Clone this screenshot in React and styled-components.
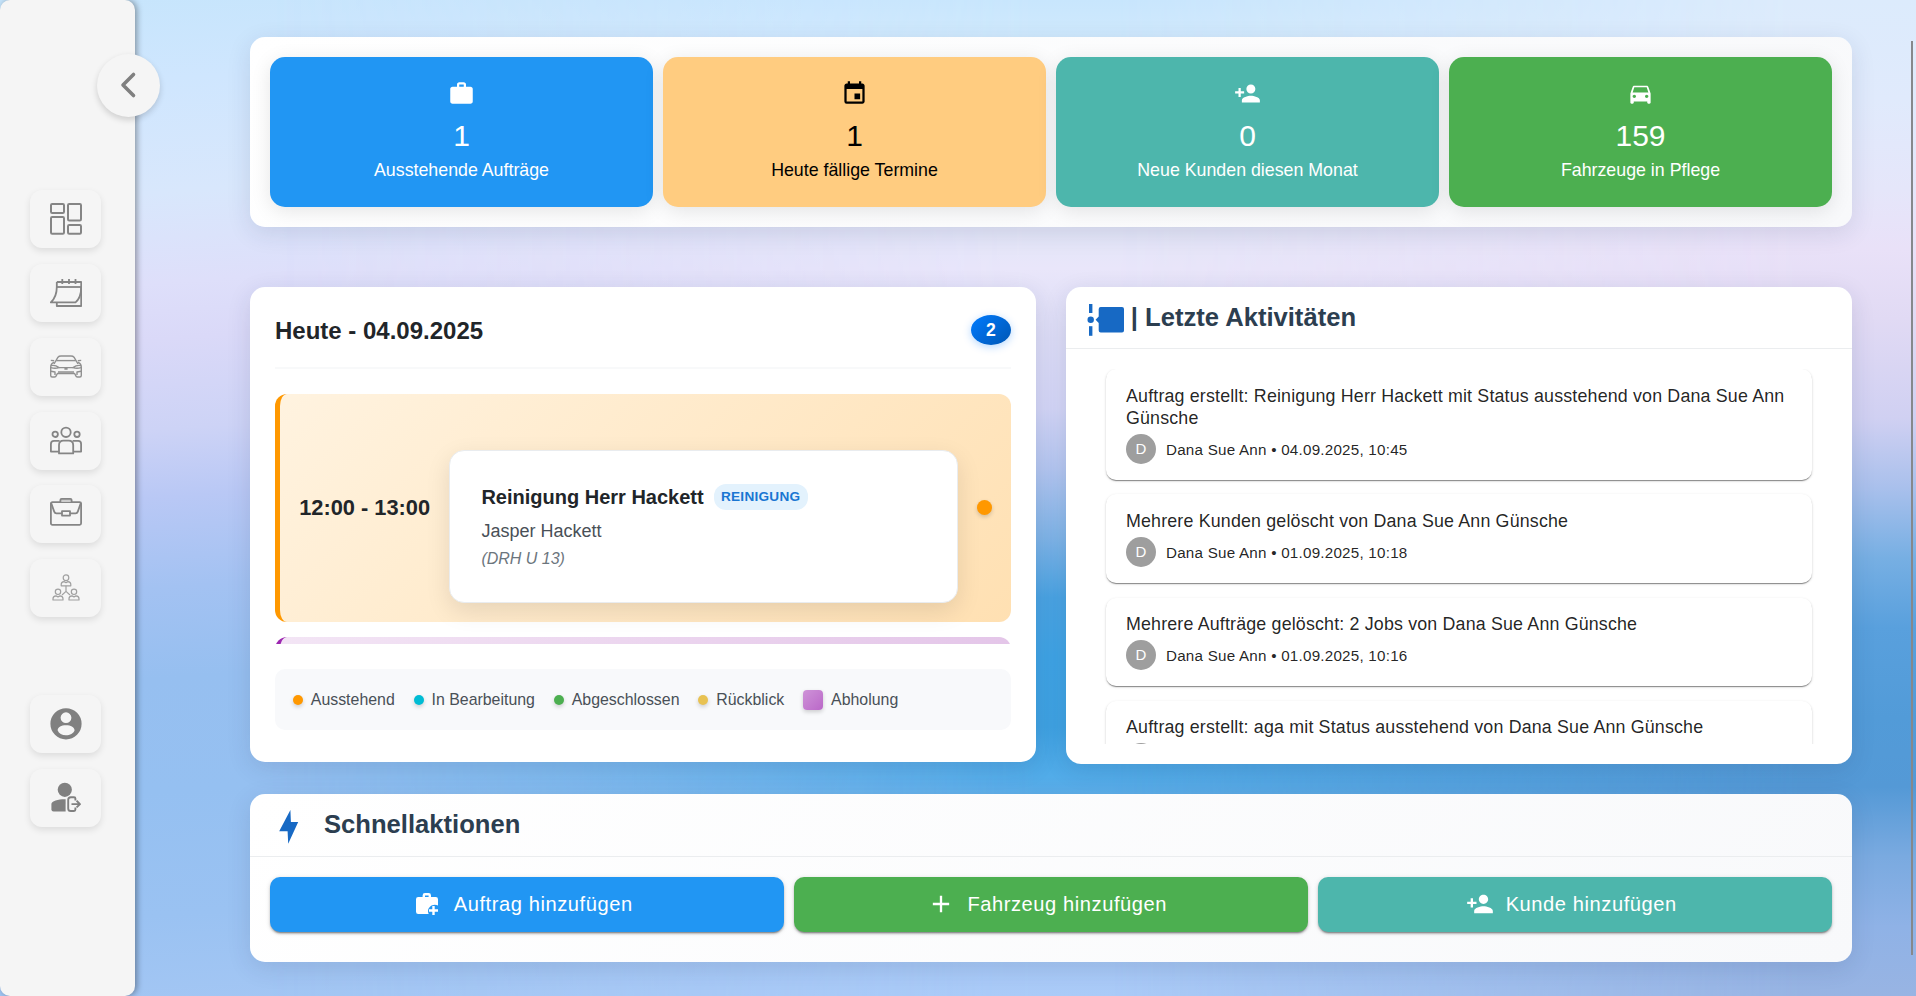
import React from "react";
import styled, { createGlobalStyle, css } from "styled-components";
import { MdWork, MdEvent, MdPersonAdd, MdDirectionsCar, MdAdd } from "react-icons/md";

const GlobalStyle = createGlobalStyle`
  *, *::before, *::after { box-sizing: border-box; }
  body {
    margin: 0;
    overflow: hidden;
    font-family: "Liberation Sans", Arial, sans-serif;
    color: rgba(0, 0, 0, 0.87);
  }
`;

/* ---------- page shell ---------- */

const Shell = styled.div`
  position: relative;
  display: flex;
  width: 100%;
  height: 100vh;
  overflow: hidden;
  isolation: isolate;
`;

const Wash = styled.div`
  position: absolute;
  inset: 0;
  z-index: -1;
  background: ${(p) => p.$fill};
  ${(p) =>
    p.$mask &&
    css`
      -webkit-mask-image: ${p.$mask};
      mask-image: ${p.$mask};
    `}
`;

const washes = [
  {
    fill: "linear-gradient(176deg, #c6e5fc 0%, #cfe6fe 8%, #d8e7fc 18%, #dedffa 26%, #dad9f8 31%, #cdd3f6 39%, #b9c8f5 45%, #a3c2f2 53%, #96bff0 61%, #95c0f1 71%, #9ac2f2 82%, #a5c7f4 92%, #a5c5f3 100%)",
  },
  {
    fill: "linear-gradient(180deg, #c8e6fd 0%, #d4ebfd 6%, #dcebfb 14%, #e3e6f8 23%, #e9e6fa 27%, #dcdcf6 34%, #d3d5f6 41%, #b4c6f0 47%, #7fb4e7 54%, #4aa3e2 60%, #3fa3e4 66%, #3fa2e2 73%, #52ace9 78%, #78b6ec 84%, #a0c5f4 92%, #abcbf8 100%)",
    mask: "linear-gradient(90deg, transparent 14%, rgba(0,0,0,.35) 30%, #000 54%)",
  },
  {
    fill: "linear-gradient(180deg, #dcebfc 0%, #e0eafc 10%, #e5e6fa 19%, #e9e1f8 25%, #e1daf4 32%, #d0d0f2 42%, #a9c0ec 49%, #77afe3 56%, #59a0dd 63%, #529bd8 72%, #5499d6 79%, #7aaae0 86%, #8fb2e6 93%, #98b4e3 100%)",
    mask: "linear-gradient(90deg, transparent 58%, #000 94%)",
  },
];

const ScrollRail = styled.div`
  flex: none;
  width: 2px;
  height: 914px;
  margin: 41px 3px 0 0;
  background: #86888c;
`;

/* ---------- sidebar ---------- */

const Sidebar = styled.aside`
  position: relative;
  flex: none;
  width: 135px;
  height: 100%;
  padding: 190.2px 0 0 30px;
  display: flex;
  flex-direction: column;
  background: #f5f5f5;
  border-radius: 10px;
  box-shadow: 2px 0 6px rgba(0, 0, 0, 0.36);
`;

const CollapseButton = styled.button`
  position: absolute;
  top: 54px;
  right: -25px;
  width: 63px;
  height: 63px;
  padding: 0;
  border: 0;
  border-radius: 50%;
  display: grid;
  place-items: center;
  background: #f5f5f5;
  box-shadow: 0 3px 6px rgba(0, 0, 0, 0.16);
`;

const NavGroup = styled.nav`
  display: flex;
  flex-direction: column;
  gap: 15.8px;
  & + & {
    margin-top: 77.8px;
    gap: 16px;
  }
`;

const NavButton = styled.button`
  width: 71px;
  height: 58px;
  padding: 0 0 0 1px;
  border: 0;
  border-radius: 12px;
  display: grid;
  place-items: center;
  background: #f5f5f5;
  box-shadow: 0 3px 7px rgba(0, 0, 0, 0.1);
`;

const Glyph = styled.svg`
  display: block;
  width: 32px;
  height: 32px;
  fill: ${(p) => (p.$solid ? "#808080" : "none")};
  stroke: ${(p) => (p.$solid ? "none" : p.$tone || "#858585")};
  stroke-width: ${(p) => p.$weight || 1.8};
  stroke-linejoin: round;
`;

const DashboardGlyph = () => (
  <Glyph viewBox="0 0 32 32" $weight={2}>
    <rect x="1" y="1" width="13" height="9" rx="1.2" />
    <rect x="18" y="1" width="13" height="16.4" rx="1.2" />
    <rect x="1" y="14" width="13" height="16.8" rx="1.2" />
    <rect x="18" y="22" width="13" height="8.8" rx="1.2" />
  </Glyph>
);

const CalendarGlyph = () => (
  <Glyph viewBox="0 0 32 32">
    <path d="M6.8 5H31.2V29H6.8V25.5" />
    <path d="M12.3 2v5M19 2v5M25.5 2v5" />
    <path d="M6.8 10H31.2" />
    <path d="M6.8 5V10C6.8 17 4.5 22 .8 25.4H25.5C29.5 22 31.2 17 31.2 10" />
  </Glyph>
);

const CarGlyph = () => (
  <Glyph viewBox="0 0 32 32" $weight={1.4} $tone="#909090">
    <path d="M4 13 8 6.2Q9 5 11 5H21Q23 5 24 6.2L28 13" />
    <path d="M6.3 9.6H25.7" />
    <path d="M.8 9.4 4.2 9.8M31.2 9.4 27.8 9.8" />
    <path d="M4 11.3Q.7 12.5.7 16V24.5Q.7 26 2.2 26H4.6Q5.8 26 6.4 24.4L7.4 22.5H24.6L25.6 24.4Q26.2 26 27.4 26H29.8Q31.3 26 31.3 24.5V16Q31.3 12.5 28 11.3" />
    <path d="M1 14.6Q5 13.6 9 16.6Q5 18 1 16.6M31 14.6Q27 13.6 23 16.6Q27 18 31 16.6" />
    <path d="M9 16.6H23M14.4 18H17.6M8 21H24M1 20.2 5 21V24M31 20.2 27 21V24" />
  </Glyph>
);

const PeopleGlyph = () => (
  <Glyph viewBox="0 0 32 32">
    <circle cx="16" cy="7.3" r="4.7" />
    <circle cx="5.2" cy="9.3" r="2.7" />
    <circle cx="27" cy="9.3" r="2.7" />
    <path d="M9 28.4V20.2Q9 15.6 13.4 15.6H18.6Q23.2 15.6 23.2 20.2V28.4Z" />
    <path d="M9.6 15.9H4Q.9 15.9.9 19V26.6H9M22.6 15.9H28.2Q31.1 15.9 31.1 19V26.6H23.2" />
  </Glyph>
);

const BriefcaseGlyph = () => (
  <Glyph viewBox="0 0 32 32">
    <rect x="0.9" y="4.2" width="30.2" height="22.6" rx="1.5" />
    <path d="M10.4 4V2Q10.4.9 11.6.9H20.4Q21.6.9 21.6 2V4" fill="#ccc" />
    <path d="M1 4.6 4.2 13.6Q4.8 15.3 6.4 15.3H12M20 15.3H25.6Q27.2 15.3 27.8 13.6L31 4.6" />
    <rect x="12" y="13.2" width="8" height="4.4" />
  </Glyph>
);

const TeamGlyph = () => (
  <Glyph viewBox="0 0 32 32" $weight={1.2} $tone="#a0a0a0">
    <circle cx="16" cy="5.7" r="2.8" />
    <path d="M11.2 13.8V12.4Q11.2 9.8 14 9.6L16 10.6 18 9.6Q20.8 9.8 20.8 12.4V13.8Z" />
    <path d="M16 13.8V19.4L12 23M16 19.4 20 23" />
    <circle cx="8" cy="19.8" r="2.7" />
    <circle cx="24" cy="19.8" r="2.7" />
    <path d="M3 28V26.8Q3 24.2 6 23.9L8 24.9 10 23.9Q13 24.2 13 26.8V28Z" />
    <path d="M19 28V26.8Q19 24.2 22 23.9L24 24.9 26 23.9Q29 24.2 29 26.8V28Z" />
  </Glyph>
);

const AccountGlyph = () => (
  <Glyph viewBox="0 0 32 32" $solid>
    <path
      fillRule="evenodd"
      d="M16 .2A15.6 15.6 0 1 1 16 31.4A15.6 15.6 0 1 1 16 .2ZM16 4.3A5.4 5.4 0 1 0 16 15.1A5.4 5.4 0 1 0 16 4.3ZM7.6 22.2C8.8 25.6 12 27.2 16 27.2S23.4 25.6 24.6 22.2C24 18.7 21 17.2 16 17.2S8.2 18.7 7.6 22.2Z"
    />
  </Glyph>
);

const LogoutGlyph = () => (
  <Glyph viewBox="0 0 32 32" $solid>
    <circle cx="14.8" cy="7.8" r="7.1" />
    <path d="M15.6 17.2C9 17 1.4 18.6 1.4 22V27.2Q1.4 29.4 3.6 29.4H15.6Z" />
    <path
      d="M25.4 18.6V16.6Q25.4 15.2 24 15.2H20.8Q18.2 15.2 18.2 17.8V26.4Q18.2 29 20.8 29H24Q25.4 29 25.4 27.6V25.6M21.5 22.1H29.6M26.6 18.8 30 22.1 26.6 25.4"
      fill="none"
      stroke="#808080"
      strokeWidth="1.9"
    />
  </Glyph>
);

/* ---------- shared content pieces ---------- */

const Main = styled.main`
  flex: 1;
  padding: 37px 59px 0 115px;
`;

const Card = styled.section`
  display: flex;
  flex-direction: column;
  border-radius: 15px;
  background: ${(p) => (p.$tinted ? "linear-gradient(135deg, #ffffff 0%, #f8f9fb 100%)" : "#fff")};
  box-shadow: 0 6px 24px rgba(30, 40, 80, 0.12);
`;

const CardHeader = styled.header`
  display: flex;
  height: 62px;
  flex: none;
  border-bottom: 1px solid #ebedef;
`;

const CardTitle = styled.h2`
  margin: 0;
  font-size: 25.6px;
  line-height: 30px;
  font-weight: 700;
  color: #2c3e50;
  white-space: pre;
`;

/* ---------- statistics ---------- */

const StatGrid = styled(Card)`
  display: grid;
  grid-template-columns: repeat(4, 1fr);
  gap: 10px;
  padding: 20px;
  height: 190px;
`;

const StatTile = styled.div`
  display: flex;
  flex-direction: column;
  align-items: center;
  padding-top: 22.5px;
  border-radius: 15px;
  background: ${(p) => p.$bg};
  color: ${(p) => p.$fg || "#fff"};
  box-shadow: 0 4px 20px rgba(0, 0, 0, 0.1);
  & > svg {
    width: 27px;
    height: 27px;
  }
`;

const StatValue = styled.div`
  margin-top: 11.5px;
  font-size: 30px;
  line-height: 36px;
`;

const StatLabel = styled.div`
  margin-top: 3.5px;
  font-size: 17.8px;
  line-height: 24px;
`;

const stats = [
  { icon: MdWork, value: "1", label: "Ausstehende Aufträge", bg: "#2196f3" },
  { icon: MdEvent, value: "1", label: "Heute fällige Termine", bg: "#ffcc80", fg: "#000" },
  { icon: MdPersonAdd, value: "0", label: "Neue Kunden diesen Monat", bg: "#4db6ac" },
  { icon: MdDirectionsCar, value: "159", label: "Fahrzeuge in Pflege", bg: "#4caf50" },
];

/* ---------- agenda ---------- */

const Columns = styled.div`
  display: grid;
  grid-template-columns: 1fr 1fr;
  align-items: start;
  gap: 30px;
  margin: 60px 0 30px;
`;

const Agenda = styled(Card)`
  height: 475px;
  padding: 25px 25px 0;
`;

const AgendaHeader = styled.header`
  display: flex;
  flex: none;
  justify-content: space-between;
  align-items: center;
  height: 57px;
  padding-bottom: 20px;
  border-bottom: 2px solid #f8f9fa;
`;

const AgendaTitle = styled.h2`
  margin: 2px 0 0;
  font-size: 24px;
  line-height: 28px;
  font-weight: 700;
  color: #212529;
`;

const CountBadge = styled.span`
  width: 40px;
  height: 30px;
  margin-top: 1px;
  border-radius: 50%;
  font-size: 17.6px;
  line-height: 30px;
  font-weight: 700;
  text-align: center;
  color: #fff;
  background: linear-gradient(135deg, #007bff, #0056b3);
  box-shadow: 0 2px 8px rgba(0, 123, 255, 0.3);
`;

const Timeline = styled.div`
  display: flex;
  flex: none;
  flex-direction: column;
  gap: 15px;
  height: 250px;
  margin-top: 25px;
  overflow: hidden;
`;

const Slot = styled.article`
  display: flex;
  flex: none;
  align-items: center;
  gap: 19.2px;
  height: 228px;
  padding: 19px 19.2px;
  border-left: 5px solid ${(p) => p.$accent};
  border-radius: 12px;
  background: ${(p) => p.$bg};
`;

const SlotTime = styled.div`
  flex: none;
  width: 131px;
  font-size: 21.8px;
  font-weight: 700;
  color: #212529;
  white-space: nowrap;
`;

const SlotDetails = styled.div`
  flex: 1;
  height: 153px;
  margin-top: 37px;
  padding: 32px 31px;
  border: 1px solid #e9ecef;
  border-radius: 15px;
  background: #fff;
  box-shadow: 0 8px 24px rgba(0, 0, 0, 0.1);
`;

const SlotHeading = styled.div`
  display: flex;
  align-items: center;
  gap: 10px;
  height: 28px;
  font-size: 20px;
  font-weight: 700;
  color: #212529;
`;

const ServiceTag = styled.span`
  width: 94px;
  height: 26px;
  border-radius: 12px;
  font-size: 13.6px;
  line-height: 26px;
  letter-spacing: 0.25px;
  text-align: center;
  text-transform: uppercase;
  background: #e3f2fd;
  color: #1976d2;
`;

const SlotCustomer = styled.div`
  margin-top: 8px;
  font-size: 18px;
  line-height: 24px;
  color: #495057;
`;

const SlotPlate = styled.div`
  margin-top: 5px;
  font-size: 16px;
  line-height: 22px;
  font-style: italic;
  color: #6c757d;
`;

const Dot = styled.span`
  flex: none;
  width: ${(p) => p.$size}px;
  height: ${(p) => p.$size}px;
  border-radius: ${(p) => p.$radius || "50%"};
  background: ${(p) => p.$color};
  box-shadow: 0 2px 4px rgba(0, 0, 0, 0.18);
`;

const SlotDot = styled(Dot)`
  margin-bottom: 2px;
`;

const Legend = styled.ul`
  display: flex;
  flex: none;
  align-items: center;
  gap: 19px;
  height: 61px;
  margin: 25px 0 0;
  padding: 0 18px;
  list-style: none;
  border-radius: 10px;
  background: #f8f9fb;
`;

const LegendItem = styled.li`
  display: flex;
  align-items: center;
  gap: 7.8px;
  font-size: 15.9px;
  color: #495057;
`;

const legend = [
  { label: "Ausstehend", color: "#ff9800", size: 10 },
  { label: "In Bearbeitung", color: "#00bcd4", size: 10 },
  { label: "Abgeschlossen", color: "#4caf50", size: 10 },
  { label: "Rückblick", color: "#e8c252", size: 10 },
  { label: "Abholung", color: "linear-gradient(135deg, #ce93d8, #ba68c8)", size: 20, radius: "4px" },
];

/* ---------- activity feed ---------- */

const ActivityCard = styled(Card)`
  height: 477px;
`;

const ActivityHeader = styled(CardHeader)`
  padding: 15px 20px 0;
  gap: 4.8px;
`;

const Feed = styled.div`
  display: flex;
  flex-direction: column;
  gap: 14.3px;
  height: 375px;
  margin: 20px 20px 0;
  padding: 0.4px 20px 0;
  overflow: hidden;
`;

const FeedItem = styled.article`
  flex: none;
  padding: 15.4px 20px 16px;
  border-radius: 10px;
  background: #fff;
  box-shadow: 0 2px 1px -1px rgba(0, 0, 0, 0.26), 0 1px 1px rgba(0, 0, 0, 0.2), 0 1px 3px rgba(0, 0, 0, 0.14);
`;

const FeedText = styled.p`
  margin: 0;
  font-size: 17.84px;
  line-height: 22px;
  letter-spacing: 0.00938em;
`;

const FeedMeta = styled.div`
  display: flex;
  align-items: center;
  gap: 10px;
  height: 30px;
  margin-top: 5.4px;
  font-size: 15.2px;
  letter-spacing: 0.23px;
`;

const Avatar = styled.span`
  width: 30px;
  height: 30px;
  border-radius: 50%;
  font-size: 15px;
  line-height: 30px;
  text-align: center;
  color: #fff;
  background: #9e9e9e;
`;

const activities = [
  {
    text: "Auftrag erstellt: Reinigung Herr Hackett mit Status ausstehend von Dana Sue Ann Günsche",
    date: "04.09.2025, 10:45",
  },
  { text: "Mehrere Kunden gelöscht von Dana Sue Ann Günsche", date: "01.09.2025, 10:18" },
  { text: "Mehrere Aufträge gelöscht: 2 Jobs von Dana Sue Ann Günsche", date: "01.09.2025, 10:16" },
  { text: "Auftrag erstellt: aga mit Status ausstehend von Dana Sue Ann Günsche" },
];

const TimelineIcon = () => (
  <svg width="40" height="34" viewBox="0 0 40 34" fill="#1769c4">
    <rect x="3" y="2" width="3.4" height="9" />
    <circle cx="4.7" cy="17.7" r="3.2" />
    <rect x="3" y="24.2" width="3.4" height="9.6" />
    <path d="M9.6 17.7 12.7 14.5V7Q12.7 5 14.7 5H36Q38 5 38 7V28.4Q38 30.4 36 30.4H14.7Q12.7 30.4 12.7 28.4V20.9Z" />
  </svg>
);

/* ---------- quick actions ---------- */

const QuickHeader = styled(CardHeader)`
  height: 63px;
  padding: 15px 20px 0;
  gap: 14px;
`;

const QuickActions = styled(Card)`
  height: 168px;
`;

const ActionRow = styled.div`
  display: grid;
  grid-template-columns: repeat(3, 1fr);
  gap: 10px;
  padding: 20px 20px 0;
`;

const ActionButton = styled.button`
  display: flex;
  align-items: center;
  justify-content: center;
  gap: 12px;
  height: 55px;
  padding: 0 7.5px 1px 0;
  border: 0;
  border-radius: 10px;
  font-family: inherit;
  font-size: 20.1px;
  letter-spacing: 0.02857em;
  color: #fff;
  background: ${(p) => p.$bg};
  box-shadow: 0 3px 1px -2px rgba(0, 0, 0, 0.24), 0 2px 2px rgba(0, 0, 0, 0.2), 0 1px 5px rgba(0, 0, 0, 0.14);
  & > svg {
    width: 28px;
    height: 28px;
  }
`;

const BoltIcon = () => (
  <svg width="40" height="36" viewBox="0 0 40 36" fill="#1769c4">
    <path d="M20.4 1 20.9 13H28.2L18.2 34.8 17.6 22.2H9.2Z" />
  </svg>
);

const BriefcasePlusIcon = () => (
  <svg viewBox="0 0 28 28" fill="currentColor">
    <path
      fillRule="evenodd"
      d="M8.6 7V5.4Q8.6 3 11 3H14.6Q17 3 17 5.4V7H21.8Q24 7 24 9.2V15.6C19.8 13 13.8 16.4 14 21.4Q14.1 22.8 14.7 24H4.2Q2 24 2 21.8V9.2Q2 7 4.2 7ZM11 7H14.6V5.4H11Z"
    />
    <path d="M18.3 15.9H20.7V19.3H24V21.7H20.7V25H18.3V21.7H15V19.3H18.3Z" />
  </svg>
);

const actions = [
  { icon: BriefcasePlusIcon, label: "Auftrag hinzufügen", bg: "#2196f3" },
  { icon: MdAdd, label: "Fahrzeug hinzufügen", bg: "#4caf50" },
  { icon: MdPersonAdd, label: "Kunde hinzufügen", bg: "#4db6ac" },
];

const primaryNav = [
  ["Dashboard", DashboardGlyph],
  ["Kalender", CalendarGlyph],
  ["Fahrzeuge", CarGlyph],
  ["Kunden", PeopleGlyph],
  ["Aufträge", BriefcaseGlyph],
  ["Team", TeamGlyph],
];

const accountNav = [
  ["Konto", AccountGlyph],
  ["Abmelden", LogoutGlyph],
];

export default function App() {
  return (
    <>
      <GlobalStyle />
      <Shell>
        {washes.map((w, i) => (
          <Wash key={i} $fill={w.fill} $mask={w.mask} />
        ))}
        <Sidebar>
          <CollapseButton aria-label="Menü einklappen">
            <svg width="63" height="63" viewBox="0 0 63 63" fill="none" stroke="#808080" strokeWidth="3.6" strokeLinecap="round" strokeLinejoin="round">
              <path d="M36.5 20.5 26 31 36.5 41.5" />
            </svg>
          </CollapseButton>
          {[primaryNav, accountNav].map((group, i) => (
            <NavGroup key={i}>
              {group.map(([name, Icon]) => (
                <NavButton key={name} aria-label={name}>
                  <Icon />
                </NavButton>
              ))}
            </NavGroup>
          ))}
        </Sidebar>

        <Main>
          <StatGrid $tinted>
            {stats.map(({ icon: Icon, value, label, bg, fg }) => (
              <StatTile key={label} $bg={bg} $fg={fg}>
                <Icon />
                <StatValue>{value}</StatValue>
                <StatLabel>{label}</StatLabel>
              </StatTile>
            ))}
          </StatGrid>

          <Columns>
            <Agenda>
              <AgendaHeader>
                <AgendaTitle>Heute - 04.09.2025</AgendaTitle>
                <CountBadge>2</CountBadge>
              </AgendaHeader>
              <Timeline>
                <Slot $accent="#ff9800" $bg="linear-gradient(135deg, #fff3e0, #ffe0b2) border-box">
                  <SlotTime>12:00 - 13:00</SlotTime>
                  <SlotDetails>
                    <SlotHeading>
                      Reinigung Herr Hackett
                      <ServiceTag>Reinigung</ServiceTag>
                    </SlotHeading>
                    <SlotCustomer>Jasper Hackett</SlotCustomer>
                    <SlotPlate>(DRH U 13)</SlotPlate>
                  </SlotDetails>
                  <SlotDot $size={15} $color="#ff9800" />
                </Slot>
                <Slot $accent="#9c27b0" $bg="linear-gradient(100deg, #f3e5f5, #ecd6ef 45%, #e3c4e8) border-box" />
              </Timeline>
              <Legend>
                {legend.map((l) => (
                  <LegendItem key={l.label}>
                    <Dot $size={l.size} $color={l.color} $radius={l.radius} />
                    {l.label}
                  </LegendItem>
                ))}
              </Legend>
            </Agenda>

            <ActivityCard>
              <ActivityHeader>
                <TimelineIcon />
                <CardTitle>| Letzte Aktivitäten</CardTitle>
              </ActivityHeader>
              <Feed>
                {activities.map((a) => (
                  <FeedItem key={a.text}>
                    <FeedText>{a.text}</FeedText>
                    <FeedMeta>
                      <Avatar>{a.date && "D"}</Avatar>
                      {a.date && `Dana Sue Ann • ${a.date}`}
                    </FeedMeta>
                  </FeedItem>
                ))}
              </Feed>
            </ActivityCard>
          </Columns>

          <QuickActions $tinted>
            <QuickHeader>
              <BoltIcon />
              <CardTitle>Schnellaktionen</CardTitle>
            </QuickHeader>
            <ActionRow>
              {actions.map(({ icon: Icon, label, bg }) => (
                <ActionButton key={label} $bg={bg}>
                  <Icon />
                  {label}
                </ActionButton>
              ))}
            </ActionRow>
          </QuickActions>
        </Main>
        <ScrollRail />
      </Shell>
    </>
  );
}
